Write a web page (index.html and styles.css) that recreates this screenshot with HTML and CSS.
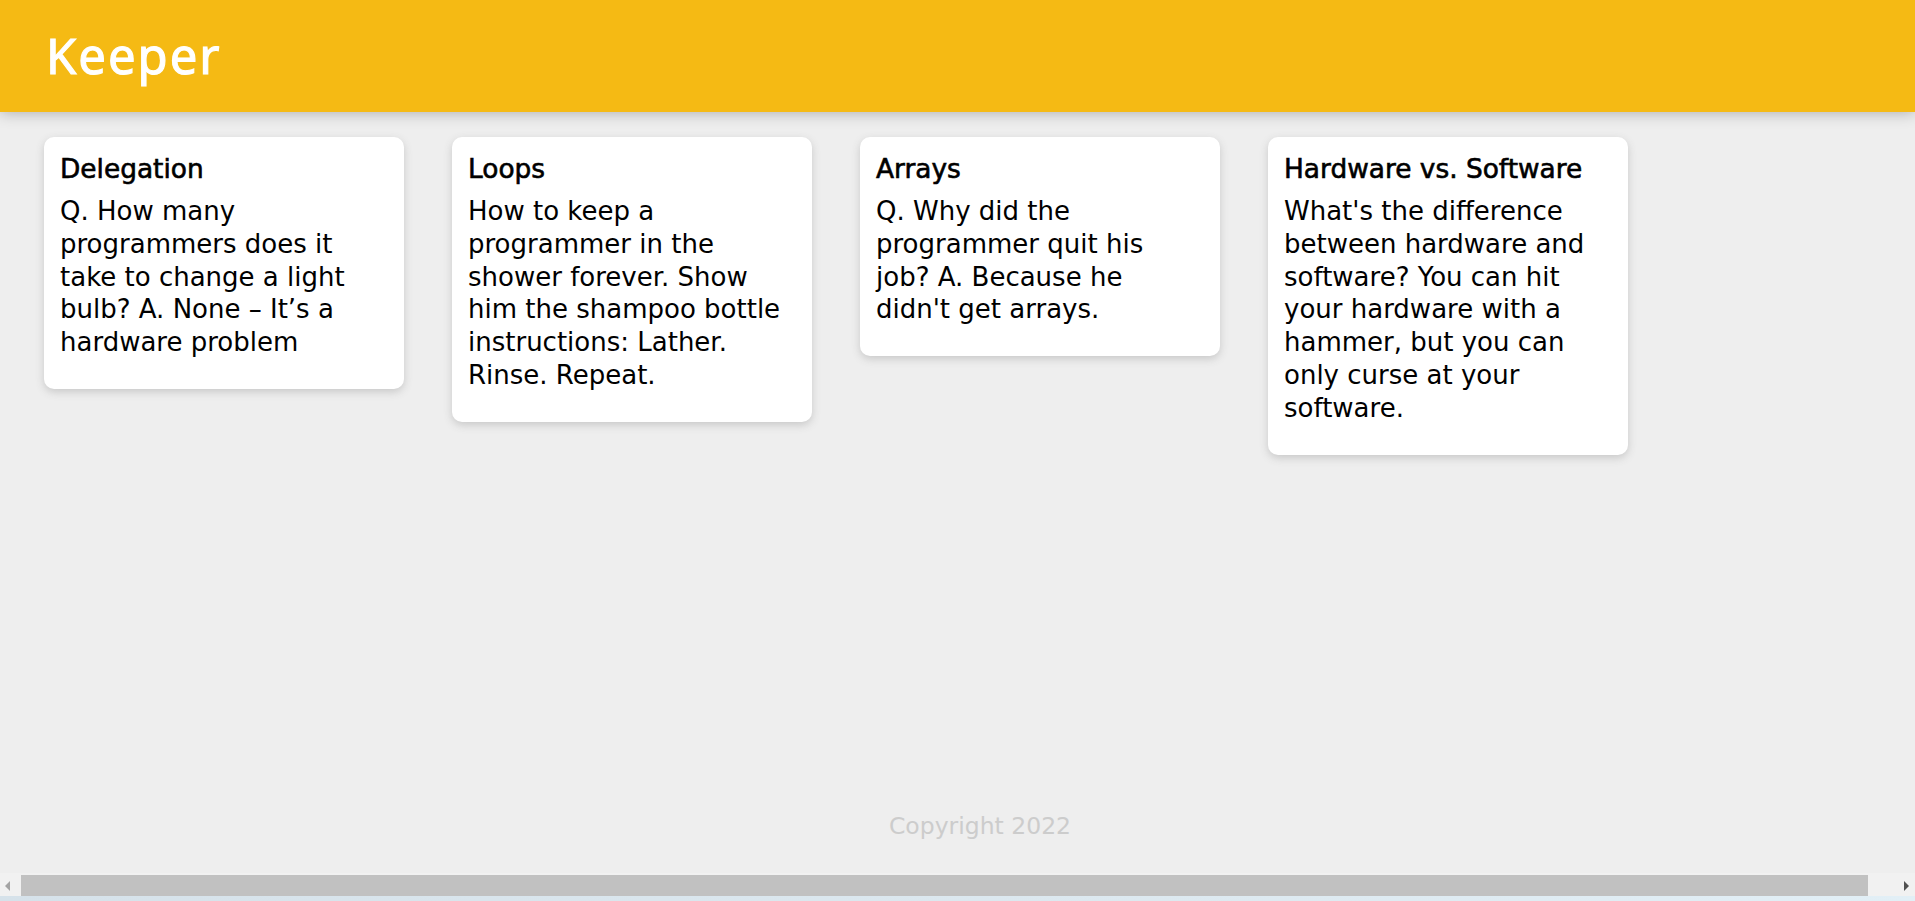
FILE: index.html
```html
<!DOCTYPE html>
<html lang="en">
<head>
<meta charset="utf-8">
<title>Keeper</title>
<link rel="stylesheet" href="styles.css">
</head>
<body>
  <header class="app-header">
    <h1 class="logo">Keeper</h1>
  </header>
  <main class="notes">
    <div class="note">
      <h2 class="note-title">Delegation</h2>
      <p class="note-text">Q. How many programmers does it take to change a light bulb? A. None – It’s a hardware problem</p>
    </div>
    <div class="note">
      <h2 class="note-title">Loops</h2>
      <p class="note-text">How to keep a programmer in the shower forever. Show him the shampoo bottle instructions: Lather. Rinse. Repeat.</p>
    </div>
    <div class="note">
      <h2 class="note-title">Arrays</h2>
      <p class="note-text">Q. Why did the programmer quit his job? A. Because he didn't get arrays.</p>
    </div>
    <div class="note">
      <h2 class="note-title">Hardware vs. Software</h2>
      <p class="note-text">What's the difference between hardware and software? You can hit your hardware with a hammer, but you can only curse at your software.</p>
    </div>
  </main>
  <footer class="app-footer">
    <p class="copyright">Copyright 2022</p>
  </footer>
  <div class="hscroll">
    <div class="hscroll-track">
      <span class="hscroll-arrow left"></span>
      <span class="hscroll-thumb"></span>
      <span class="hscroll-arrow right"></span>
    </div>
    <div class="taskbar-edge"></div>
  </div>
</body>
</html>
```
FILE: styles.css
```css
* { box-sizing: border-box; }

html, body { height: 100%; }

body {
  margin: 0;
  background: #eeeeee;
  font-family: "DejaVu Sans", "Noto Sans", sans-serif;
  color: #000;
  display: flex;
  flex-direction: column;
  min-height: 901px;
}

.app-header {
  background: #f5ba14;
  height: 112px;
  padding-left: 46px;
  box-shadow: 0 0 15px 0 rgba(0, 0, 0, 0.3);
  position: relative;
  z-index: 1;
}

.logo {
  margin: 0;
  color: #fff;
  font-family: "Noto Sans", sans-serif;
  font-weight: normal;
  font-size: 49px;
  line-height: 110px;
  letter-spacing: 2px;
  -webkit-text-stroke: 1.1px #fff;
}

.notes {
  display: flex;
  align-items: flex-start;
  gap: 48px;
  padding: 25px 0 0 44px;
}

.note {
  width: 360px;
  background: #fff;
  border-radius: 10px;
  box-shadow: 0 3px 8px #c8c8c8;
  padding: 15px 22px 15px 16px;
}

.note-title {
  margin: 0 0 10px 0;
  font-size: 26.4px;
  font-weight: normal;
  line-height: 33px;
  -webkit-text-stroke: 0.6px #000;
  white-space: nowrap;
}

.note-text {
  margin: 0 0 15px 0;
  font-size: 26px;
  line-height: 32.8px;
  white-space: pre-wrap;
  word-wrap: break-word;
}

.app-footer {
  margin-top: auto;
  padding: 0 0 60px 45px;
  text-align: center;
}

.copyright {
  margin: 0;
  color: #cccccc;
  font-size: 23.5px;
  line-height: 30px;
}

.hscroll {
  position: fixed;
  left: 0;
  right: 0;
  bottom: 0;
  z-index: 5;
}

.hscroll-track {
  height: 23px;
  background: #f1f1f1;
  display: flex;
  align-items: flex-end;
}

.hscroll-thumb {
  margin-left: 4px;
  width: 1847px;
  height: 21px;
  background: #c1c1c1;
}

.hscroll-arrow {
  width: 17px;
  height: 21px;
  position: relative;
}

.hscroll-arrow::before {
  content: "";
  position: absolute;
  top: 6px;
  border-top: 5px solid transparent;
  border-bottom: 5px solid transparent;
}

.hscroll-arrow.left::before {
  left: 5px;
  border-right: 5px solid #a3a3a3;
}

.hscroll-arrow.right {
  margin-left: auto;
}

.hscroll-arrow.right::before {
  left: 6px;
  border-left: 5px solid #505050;
}

.taskbar-edge {
  height: 5px;
  background: linear-gradient(90deg, #d6e2ea 0%, #dde9f0 60%, #e2eff6 100%);
}
```
